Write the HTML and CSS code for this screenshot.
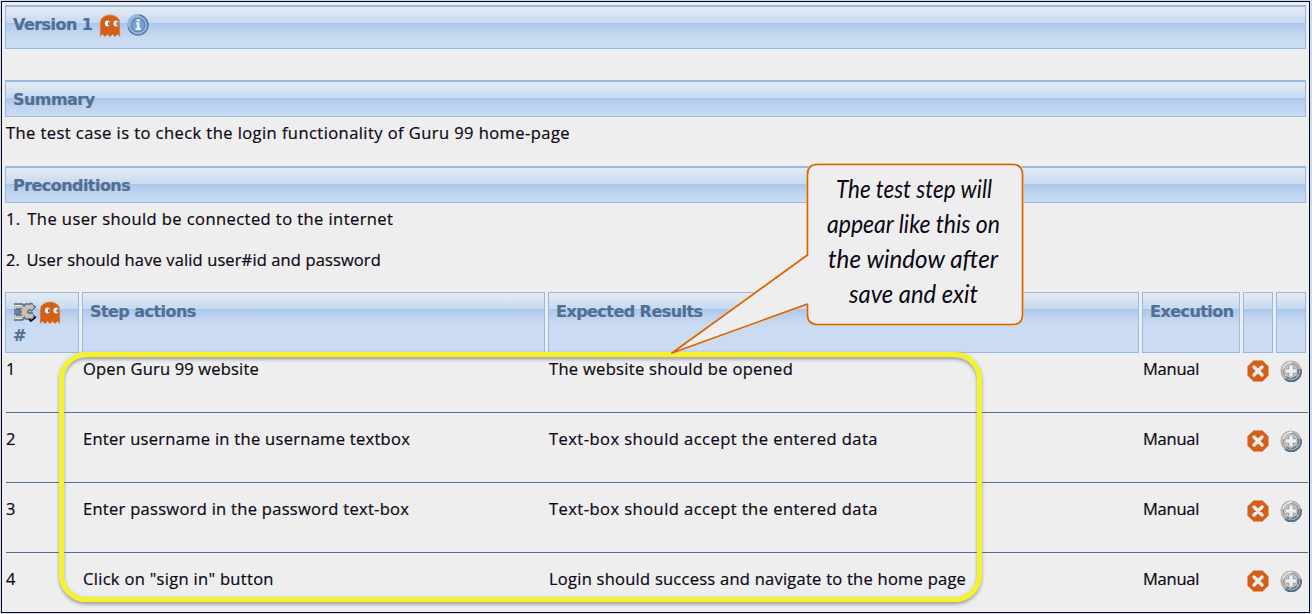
FILE: index.html
```
<!DOCTYPE html>
<html lang="en">
<head>
<meta charset="utf-8">
<title>Test case - Version 1</title>
<link rel="stylesheet" href="styles.css">
</head>
<body>
<svg class="defs" width="0" height="0" aria-hidden="true">
  <symbol id="ghost" viewBox="0 0 22 24">
    <path d="M1 23V9Q1 5 4 3Q7 .8 11 .8T18 3Q21 5 21 9V23L18.5 20.5L16 23L13.5 20.5L11 23L8.5 20.5L6 23L3.5 20.5Z" fill="#d65f18" stroke="#d8b698" stroke-width=".7"/>
    <ellipse cx="8.5" cy="9.5" rx="2.6" ry="2.9" fill="#eee"/><ellipse cx="17" cy="9.5" rx="2.6" ry="2.9" fill="#eee"/>
    <path d="M9 8.3h1.8v3H9zM17.6 8.3h1.8v3h-1.8z" fill="#526e91"/>
  </symbol>
  <symbol id="info" viewBox="0 0 22 22">
    <circle cx="11" cy="11" r="10" fill="#97b9e6" stroke="#56779f" stroke-width="1.5"/>
    <circle cx="11" cy="11" r="6.9" fill="#7b9dcc" stroke="#5f82b0" stroke-width="1.2"/>
    <path d="M1.2 13A10 10 0 0 1 12 1" fill="none" stroke="#97b9e6" stroke-width="2"/>
    <path d="M9.7 5h3v2.4h-3zM9.2 8.3h3.4v5.5h1.4v2.2H8.5v-2.2h1.3v-3.4h-.6z" fill="#e4e9f0"/>
  </symbol>
  <symbol id="shuffle" viewBox="0 0 24 20">
    <path d="M1 5H8L14 14H20M1 15H8L14 5H20" fill="none" stroke="#526e91" stroke-width="7.4"/>
    <path d="M17 0L23.5 5L18 10ZM17 9L23.5 15L18 20Z" fill="#526e91"/>
    <path d="M1 5H8L14 14H20M1 15H8L14 5H20" fill="none" stroke="#ccbfae" stroke-width="4.4"/>
    <path d="M18 2L21.5 5L18 8z" fill="#ccbfae"/>
    <path d="M1 10h8M3 7h6M3 13h6" stroke="#526e91" stroke-width="1.3"/>
    <path d="M2 3.5h6M2 16.5h6" stroke="#eee"/>
    <path d="M16 17l2 2.5M18 19l5-4" stroke="#0b0714" stroke-width="1.5"/>
  </symbol>
  <symbol id="delete" viewBox="0 0 22 22">
    <path d="M6.5.5h9l6 6v9l-6 6h-9l-6-6v-9z" fill="#d65f18" stroke="#dda17a" stroke-width=".8"/>
    <path d="M7 7l8 8M15 7l-8 8" stroke="#eee" stroke-width="3.4" stroke-linecap="round"/>
  </symbol>
  <symbol id="add" viewBox="0 0 22 22">
    <circle cx="11" cy="11" r="9.8" fill="#ccbfae" stroke="#b3aca4" stroke-width="1.4"/>
    <path d="M20.5 9A9.7 9.7 0 0 1 5 19" fill="none" stroke="#526e91" stroke-width="2"/>
    <circle cx="11" cy="11" r="7.5" fill="#c2c6cb" stroke="#8d969f" stroke-width="1.2"/>
    <path d="M18 9A7.5 7.5 0 0 1 7 17.5" fill="none" stroke="#5f7899" stroke-width="1.5"/>
    <path d="M3 9Q5 3 12 2" fill="none" stroke="#eee" stroke-width="1.5"/>
    <path d="M4.5 15.5h2M9 18h2M16 15h2" stroke="#dcd64a" stroke-width="1.2"/>
    <path d="M11 6v10M6 11h10" stroke="#8595a8" stroke-width="5.2"/>
    <path d="M11 6v10M6 11h10" stroke="#eee" stroke-width="3.6"/>
  </symbol>
</svg>

<main class="page">
  <h1 class="bar bar-version">Version 1
    <svg class="ghost"><use href="#ghost"/></svg>
    <svg class="icon"><use href="#info"/></svg>
  </h1>

  <h2 class="bar bar-summary">Summary</h2>
  <p class="text summary-text">The test case is to check the login functionality of Guru 99 home-page</p>

  <h2 class="bar bar-pre">Preconditions</h2>
  <p class="text pre-one"><span class="ordinal">1.</span> The user should be connected to the internet</p>
  <p class="text pre-two"><span class="ordinal">2.</span> User should have valid user#id and password</p>

  <section class="steps">
    <div class="grid head">
      <div class="cell num-head">
        <div class="num-icons"><svg class="shuffle"><use href="#shuffle"/></svg><svg class="ghost"><use href="#ghost"/></svg></div>
        <div>#</div>
      </div>
      <div class="cell">Step actions</div>
      <div class="cell">Expected Results</div>
      <div class="cell">Execution</div>
      <div class="cell"></div>
      <div class="cell"></div>
    </div>
    <div class="grid row row-first">
      <span>1</span><span class="t18">Open Guru 99 website</span><span class="t31">The website should be opened</span><span class="manual">Manual</span>
      <svg class="icon"><use href="#delete"/></svg><svg class="icon"><use href="#add"/></svg>
    </div>
    <div class="grid row">
      <span>2</span><span class="t29">Enter username in the username textbox</span><span class="t46">Text-box should accept the entered data</span><span class="manual">Manual</span>
      <svg class="icon"><use href="#delete"/></svg><svg class="icon"><use href="#add"/></svg>
    </div>
    <div class="grid row">
      <span>3</span><span class="t29">Enter password in the password text-box</span><span class="t46">Text-box should accept the entered data</span><span class="manual">Manual</span>
      <svg class="icon"><use href="#delete"/></svg><svg class="icon"><use href="#add"/></svg>
    </div>
    <div class="grid row row-last">
      <span>4</span><span class="t31">Click on "sign in" button</span><span class="t25">Login should success and navigate to the home page</span><span class="manual">Manual</span>
      <svg class="icon"><use href="#delete"/></svg><svg class="icon"><use href="#add"/></svg>
    </div>
  </section>
</main>

<div class="highlight"></div>
<svg class="callout" width="360" height="196" viewBox="668 160 360 196">
  <path class="callout-edge" d="M817.5 164.5H1012.5Q1022.5 164.5 1022.5 174.5V314.5Q1022.5 324.5 1012.5 324.5H817.5Q807.5 324.5 807.5 314.5V304L672 353L807.5 255V174.5Q807.5 164.5 817.5 164.5Z"/>
  <path class="callout-shape" d="M817.5 164.5H1012.5Q1022.5 164.5 1022.5 174.5V314.5Q1022.5 324.5 1012.5 324.5H817.5Q807.5 324.5 807.5 314.5V304L672 353L807.5 255V174.5Q807.5 164.5 817.5 164.5Z"/>
  <g class="note">
    <text x="836" y="198" textLength="156" lengthAdjust="spacingAndGlyphs">The test step will</text>
    <text x="827" y="233" textLength="173" lengthAdjust="spacingAndGlyphs">appear like this on</text>
    <text x="828" y="268" textLength="170" lengthAdjust="spacingAndGlyphs">the window after</text>
    <text x="849" y="303" textLength="129" lengthAdjust="spacingAndGlyphs">save and exit</text>
  </g>
</svg>
</body>
</html>
```
FILE: styles.css
```
* { box-sizing: border-box; }

body {
  margin: 0;
  height: 614px;
  overflow: hidden;
  background: #cbdcf2;
  color: #0b0714;
  font: 16.5px/24px "Open Sans", "Noto Sans", sans-serif;
}

.defs { display: none; }

.page {
  width: 1309px;
  height: 612px;
  margin: 1px 0 0 1px;
  padding: 3px;
  border: 1px solid #0b0718;
  background: #eee;
  -webkit-text-stroke: 0.2px;
}

.bar, .cell {
  margin: 0;
  padding-left: 7px;
  border: 1px solid #97b9e6;
  color: #526e91;
  background: #cbdcf2 linear-gradient(#e4eaf0 0, #d9e4f1 7px, #cbdcf2 13px, #cbdcf2 16px, #a6c3e9 16px, #b0cbec 18px, #bbd1ef 23px, #c5d8f1 29px, #cbdcf2 34px);
  font: bold 16px/24px "DejaVu Sans", sans-serif;
  letter-spacing: -0.55px;
}

.bar { border-top-width: 2px; }

.bar-version {
  display: flex;
  align-items: flex-start;
  height: 44px;
  padding-top: 6px;
}
.bar-version .ghost { margin: 1px 0 0 7px; }
.bar-version .icon { margin: 1px 0 0 6px; }

.bar-summary { height: 37px; margin-top: 31px; padding-top: 6px; }
.bar-pre { height: 37px; margin-top: 21px; padding-top: 6px; }

.ghost { width: 22px; height: 24px; flex: none; }
.icon { width: 22px; height: 22px; flex: none; }
.shuffle { width: 24px; height: 20px; flex: none; }

.text { margin: 0; padding-left: 1px; white-space: nowrap; }
.summary-text { margin-top: 4px; letter-spacing: 0.437px; }
.pre-one { margin-top: 4px; letter-spacing: 0.43px; }
.pre-two { margin-top: 17px; letter-spacing: 0.12px; }
.ordinal { margin-right: 2px; }

.steps { margin-top: 20px; }

.grid {
  display: grid;
  grid-template-columns: 74px 463px 591px 98px 30px 30px;
  column-gap: 3px;
}

.head { height: 61px; }
.cell { padding-top: 7px; white-space: nowrap; }
.num-icons { display: flex; align-items: center; gap: 2px; height: 24px; }
.num-icons .ghost { margin-top: 1px; }

.row {
  height: 70px;
  margin: 0 -2px 0 1px;
  padding-top: 14px;
  border-bottom: 1px solid #526e91;
  white-space: nowrap;
}
.row-first { height: 60px; padding-top: 4px; }
.row-last { height: 60px; border-bottom: 0; }
.row .icon { margin: 3px 0 0 3px; }

.t18 { letter-spacing: 0.18px; }
.t25 { letter-spacing: 0.25px; }
.t29 { letter-spacing: 0.29px; }
.t31 { letter-spacing: 0.31px; }
.t46 { letter-spacing: 0.46px; }
.manual { letter-spacing: -0.25px; }

/* Frame drawn over the step rows */
.highlight {
  position: absolute;
  left: 59px;
  top: 352px;
  width: 923px;
  height: 250px;
  border: 5px solid #f6f22a;
  border-radius: 27px;
  box-shadow: 0 3px 3px rgba(130, 120, 120, .5), 0 0 3px rgba(140, 170, 215, .5), inset 0 3px 3px rgba(130, 120, 120, .5), inset 0 0 3px rgba(140, 170, 215, .5);
}

/* Speech balloon over the page */
.callout { position: absolute; left: 668px; top: 160px; }
.callout-edge { fill: none; stroke: #f0e060; stroke-width: 2.6; stroke-linejoin: round; }
.callout-shape { fill: #eee; stroke: #d65f18; stroke-width: 1.6; stroke-linejoin: round; }
.note { font: italic 25px Lato, "Open Sans", sans-serif; fill: #0b0714; }
```
